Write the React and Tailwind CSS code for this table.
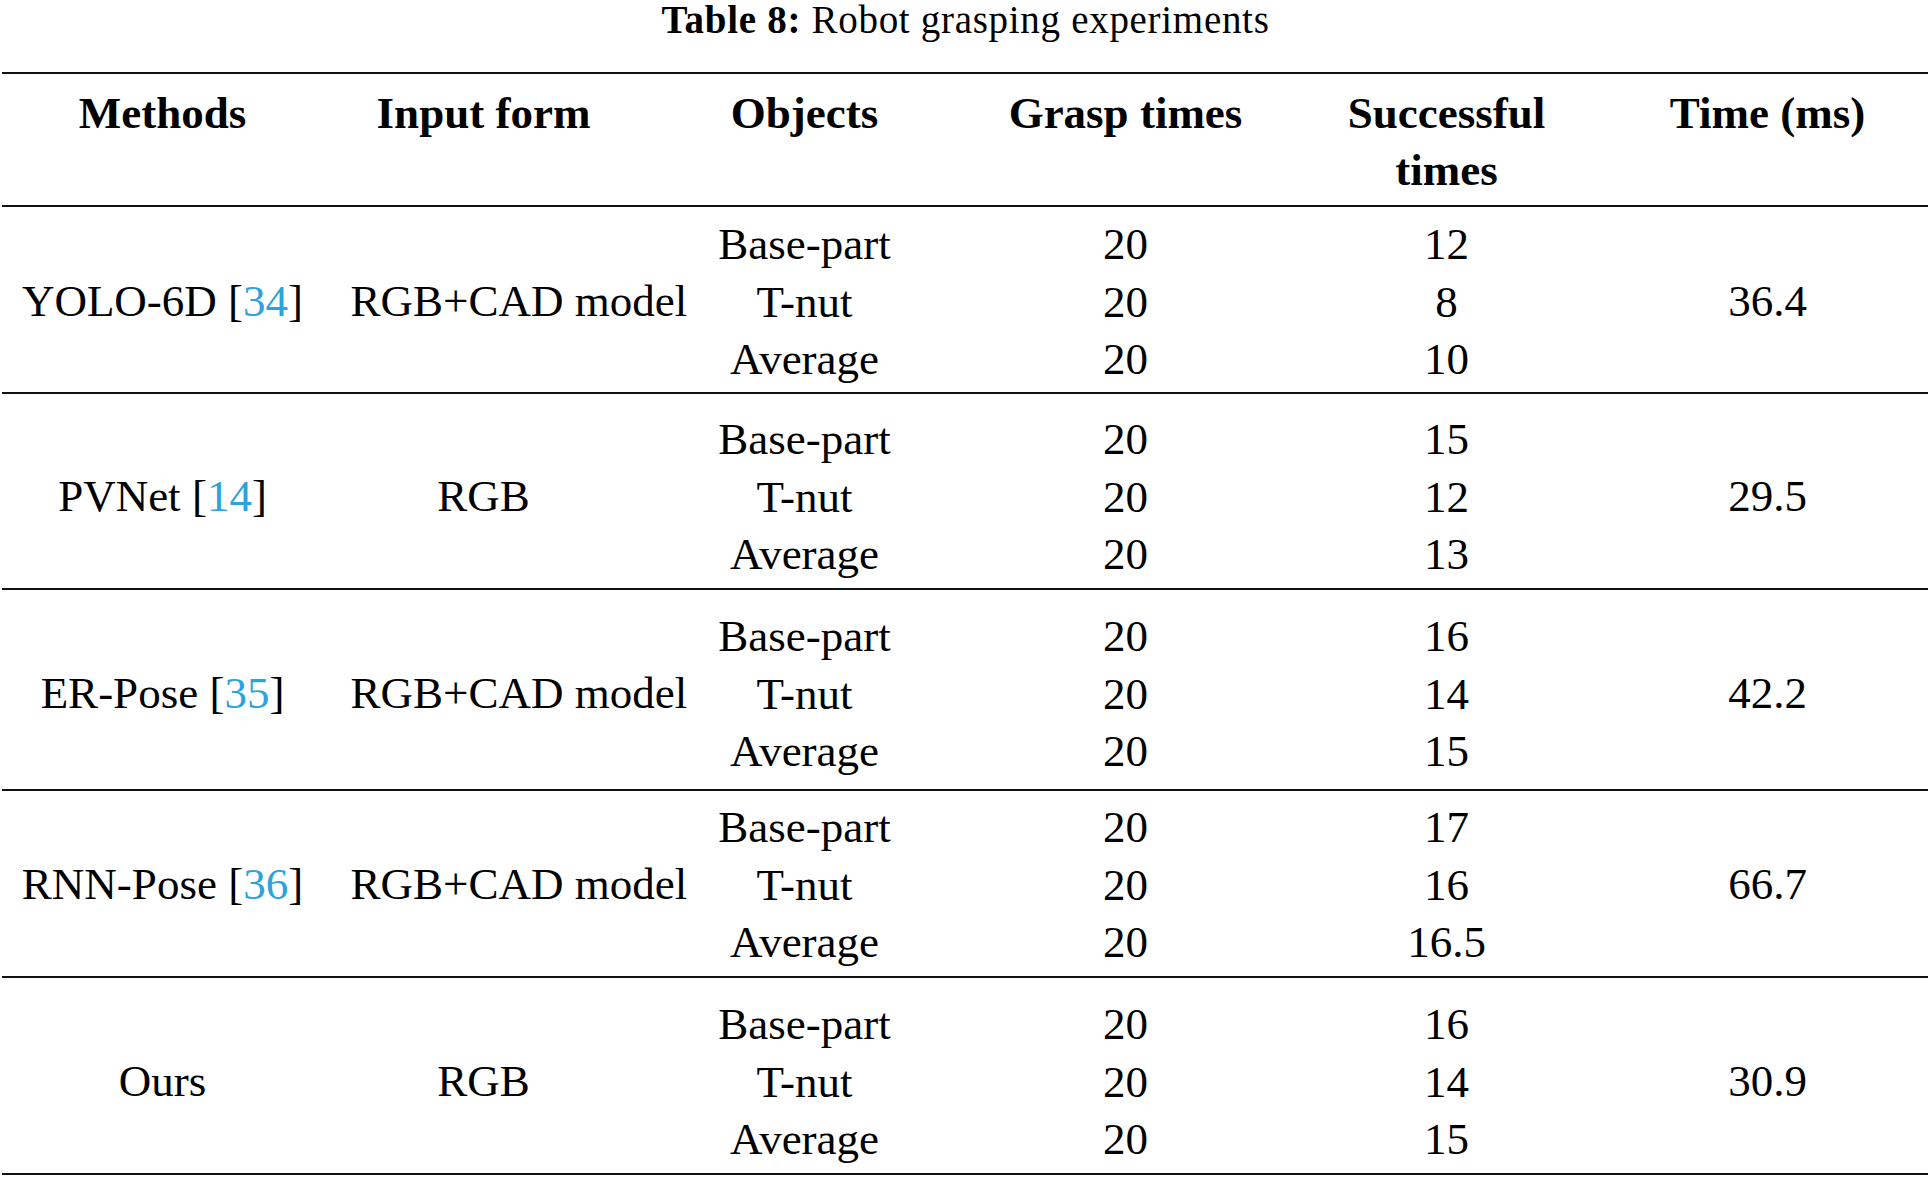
import React from 'react';

const rows = [
  { method: 'YOLO-6D', cite: '34', input: 'RGB+CAD model', success: ['12', '8', '10'], time: '36.4', pt: 'pt-[9px]', h: 'h-[187px]' },
  { method: 'PVNet', cite: '14', input: 'RGB', success: ['15', '12', '13'], time: '29.5', pt: 'pt-[17px]', h: 'h-[196px]' },
  { method: 'ER-Pose', cite: '35', input: 'RGB+CAD model', success: ['16', '14', '15'], time: '42.2', pt: 'pt-[18px]', h: 'h-[201px]' },
  { method: 'RNN-Pose', cite: '36', input: 'RGB+CAD model', success: ['17', '16', '16.5'], time: '66.7', pt: 'pt-[8px]', h: 'h-[187px]' },
  { method: 'Ours', cite: null, input: 'RGB', success: ['16', '14', '15'], time: '30.9', pt: 'pt-[18px]', h: 'h-[197px]' },
];

const objects = ['Base-part', 'T-nut', 'Average'];

// single value centred on the middle line of the 3-line block
const MidCell = ({ children, narrow }) => (
  <div className="flex h-[172px] items-center">
    <div className={`mx-auto whitespace-nowrap text-center ${narrow ? 'w-[266px]' : 'w-full'}`}>
      {children}
    </div>
  </div>
);

const ListCell = ({ items }) => (
  <div className="flex flex-col items-center whitespace-nowrap">
    {items.map((item, i) => (
      <div key={i}>{item}</div>
    ))}
  </div>
);

const DataRow = ({ row }) => (
  <div className={`grid grid-cols-6 border-b-2 border-[#111] ${row.h} ${row.pt}`}>
    <MidCell>
      {row.method}
      {row.cite && (
        <>
          &nbsp;[<span className="text-[#2da3dc]">{row.cite}</span>]
        </>
      )}
    </MidCell>
    <MidCell narrow>{row.input}</MidCell>
    <ListCell items={objects} />
    <ListCell items={['20', '20', '20']} />
    <ListCell items={row.success} />
    <MidCell>{row.time}</MidCell>
  </div>
);

export default function App() {
  return (
    <div className="min-h-screen bg-white text-black font-['Liberation_Serif','Times_New_Roman',serif]">
      <div className="flex h-[72px] justify-center">
        <div className="text-[39px] leading-[40px] tracking-[0.7px] whitespace-nowrap">
          <span className="font-bold">Table 8:</span> Robot grasping experiments
        </div>
      </div>

      <div className="ml-[2px] mr-[3px] border-t-2 border-[#111] text-[45px] leading-[57.5px]">
        <div className="grid h-[133px] grid-cols-6 border-b-2 border-[#111] pt-[11px] text-center font-bold leading-[57px]">
          <div>Methods</div>
          <div>Input form</div>
          <div>Objects</div>
          <div>Grasp times</div>
          <div>
            Successful
            <br />
            times
          </div>
          <div>Time (ms)</div>
        </div>

        {rows.map(row => (
          <DataRow key={row.method} row={row} />
        ))}
      </div>
    </div>
  );
}
